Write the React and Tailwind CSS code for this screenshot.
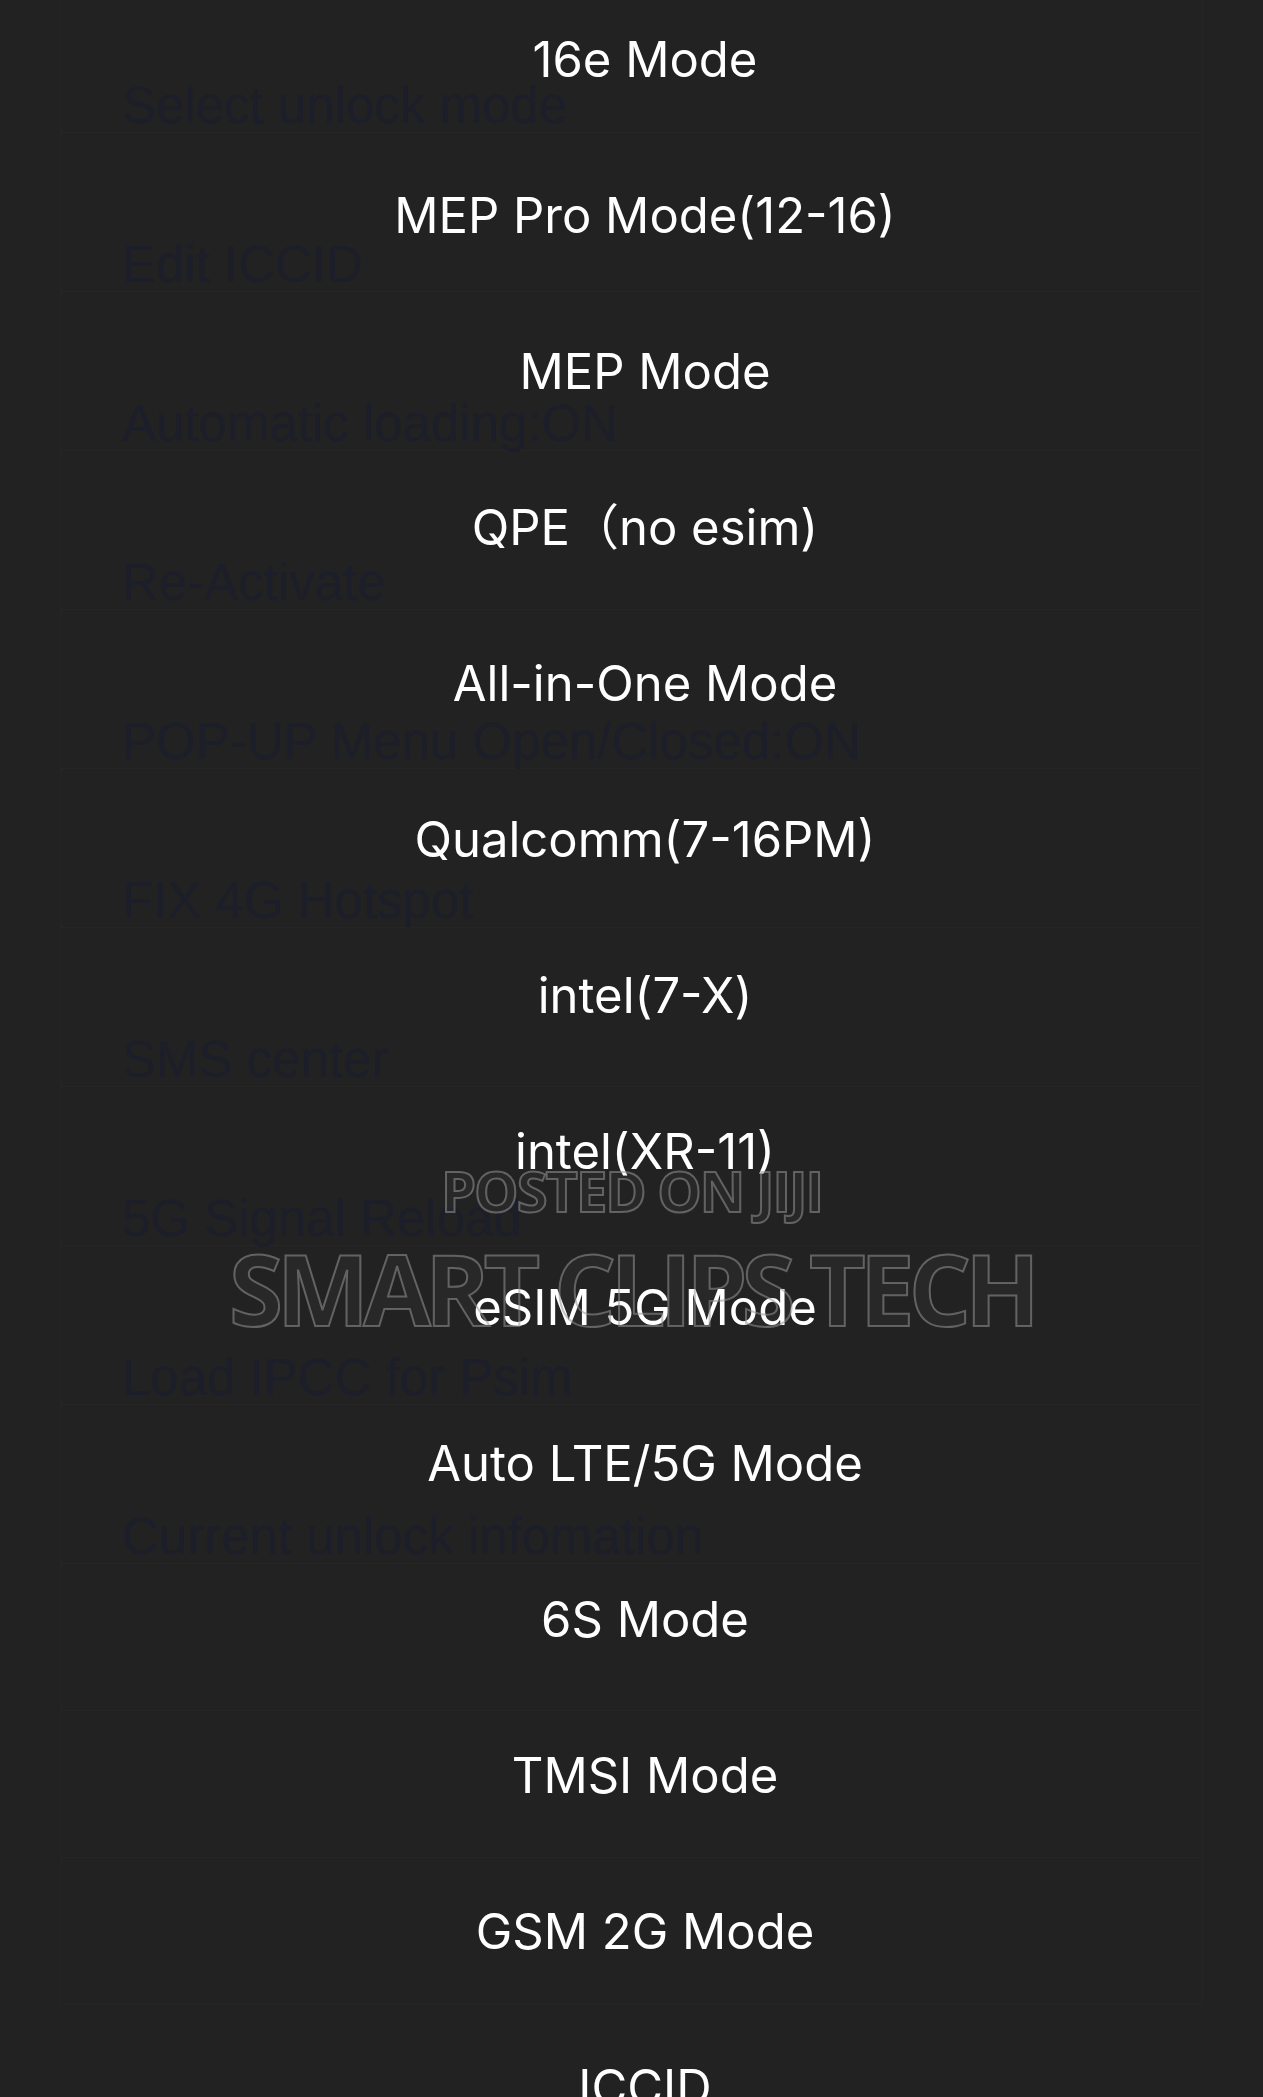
import React from "react";

const backRows = [
  "Select unlock mode",
  "Edit ICCID",
  "Automatic loading:ON",
  "Re-Activate",
  "POP-UP Menu Open/Closed:ON",
  "FIX 4G Hotspot",
  "SMS center",
  "5G Signal Reload",
  "Load IPCC for Psim",
  "Current unlock infomation",
];

const modes = [
  "16e Mode",
  "MEP Pro Mode(12-16)",
  "MEP Mode",
  "QPE（no esim)",
  "All-in-One Mode",
  "Qualcomm(7-16PM)",
  "intel(7-X)",
  "intel(XR-11)",
  "eSIM 5G Mode",
  "Auto LTE/5G Mode",
  "6S Mode",
  "TMSI Mode",
  "GSM 2G Mode",
  "ICCID",
];

const App = () => {
  return (
    <div className="relative h-[2097px] overflow-hidden bg-[#222222]">
      {/* dimmed settings list underneath */}
      <div className="mx-[60px] border-x border-[#252525]">
        {backRows.map((label, i) => (
          <div
            key={label}
            className={`${i === 0 ? "h-[133px]" : "h-[159px]"} flex items-end border-b border-[#262626] pl-[61px]`}
          >
            <span className="font-['Liberation_Sans',Arial,sans-serif] text-[51px] leading-[52px] text-[#1c1e29]">
              {label}
            </span>
          </div>
        ))}
        {[0, 1, 2].map((n) => (
          <div key={n} className="h-[147px] border-b border-[#252525]" />
        ))}
      </div>

      {/* action sheet items */}
      <div className="absolute inset-0 flex flex-col items-center gap-[108px] pl-[27px] pt-[36px]">
        {modes.map((m) => (
          <div
            key={m}
            className="font-['Inter','Noto_Sans_CJK_SC',sans-serif] text-[49px] leading-[48px] text-white whitespace-nowrap"
          >
            {m}
          </div>
        ))}
      </div>

      {/* watermark */}
      <div className="pointer-events-none absolute left-0 right-0 top-[1155px] flex flex-col items-center font-['Open_Sans',sans-serif] font-bold text-white/[0.03] [-webkit-text-stroke:2px_rgba(150,150,150,0.55)]">
        <div className="text-[56px] leading-[70px] tracking-[-2px]">POSTED ON JIJI</div>
        <div className="mt-[8px] text-[98px] leading-[110px] tracking-[-6px]">SMART CLIPS TECH</div>
      </div>
    </div>
  );
};

export default App;
